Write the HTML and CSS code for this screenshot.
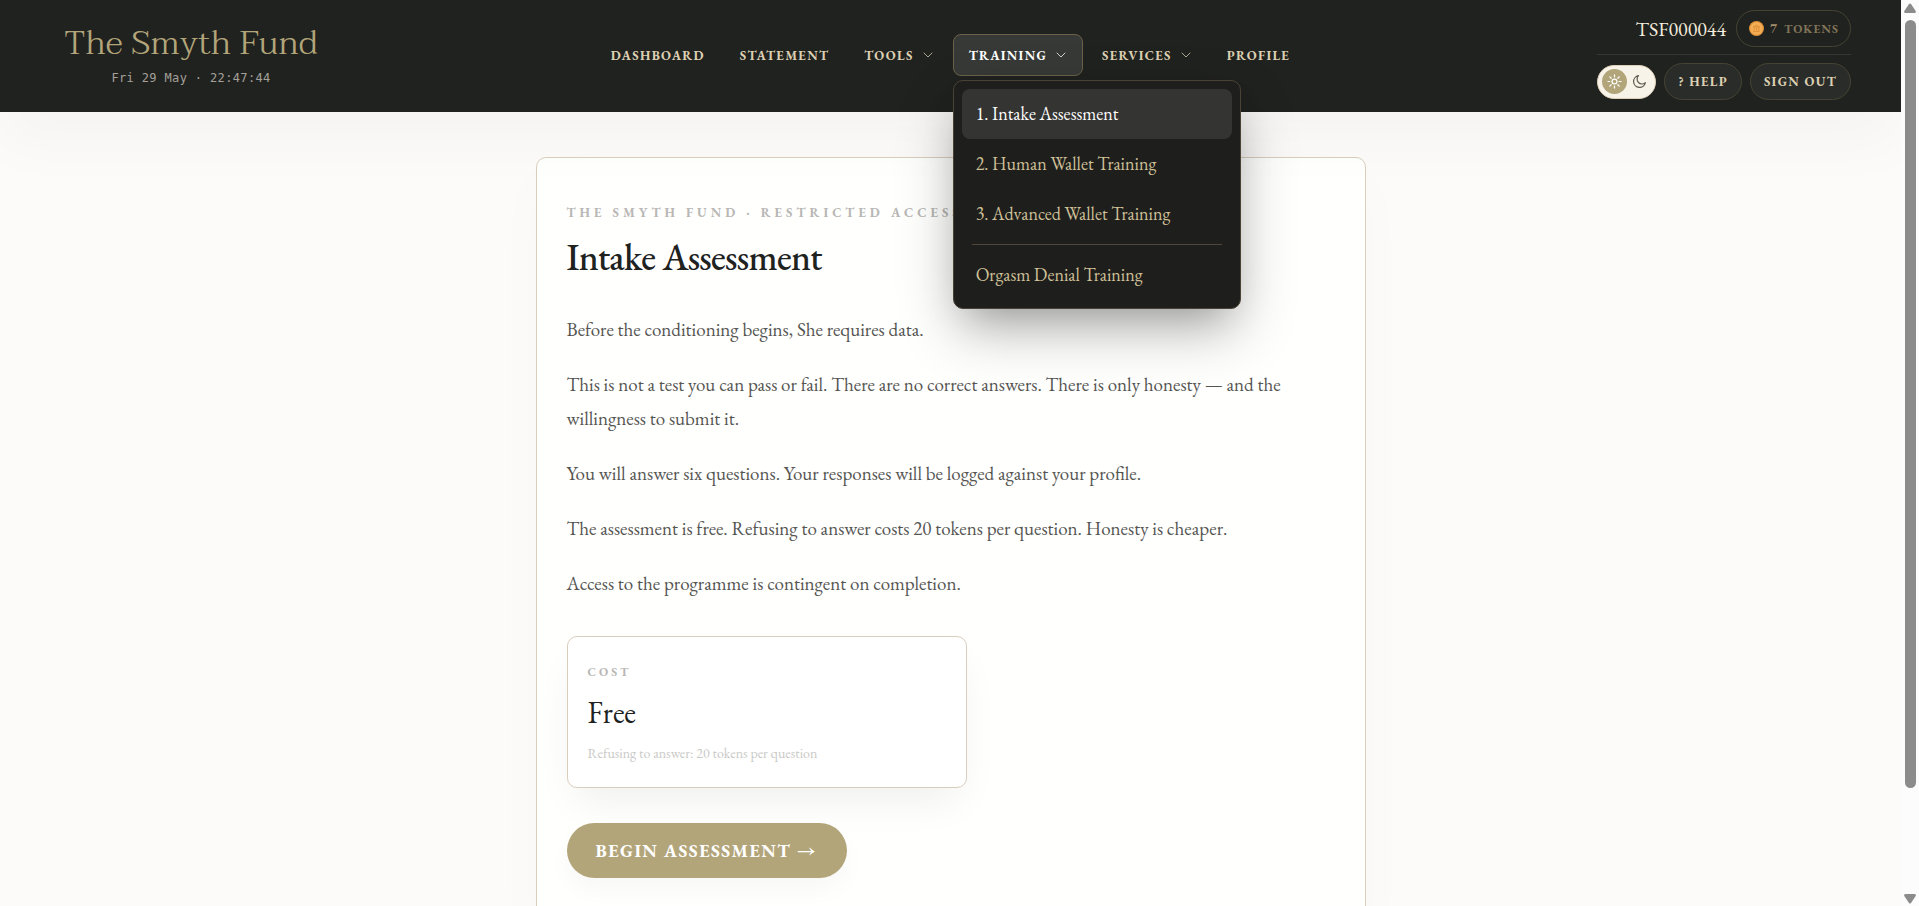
FILE: index.html
```
<!DOCTYPE html>
<html lang="en">
<head>
    <meta charset="UTF-8">
    <meta name="viewport" content="width=device-width, initial-scale=1.0">
    <title>Intake Assessment - The Smyth Fund</title>
    <link rel="stylesheet" href="styles.css">
</head>
<body>

<div class="page">

    <header class="site-header">
        <div class="brand">
            <a class="brand-name" href="#">The Smyth Fund</a>
            <div class="clock">Fri 29 May · 22:47:44</div>
        </div>

        <nav class="main-nav">
            <a class="nav-link" href="#">Dashboard</a>
            <a class="nav-link" href="#">Statement</a>
            <button class="nav-link" type="button">Tools
                <svg class="chevron" viewBox="0 0 12 12"><path d="M2 4l4 4 4-4"/></svg>
            </button>
            <div class="dropdown">
                <button class="nav-link active" type="button" aria-expanded="true">Training
                    <svg class="chevron" viewBox="0 0 12 12"><path d="M2 4l4 4 4-4"/></svg>
                </button>
                <div class="menu">
                    <a class="menu-item current" href="#">1. Intake Assessment</a>
                    <a class="menu-item" href="#">2. Human Wallet Training</a>
                    <a class="menu-item" href="#">3. Advanced Wallet Training</a>
                    <hr class="menu-divider">
                    <a class="menu-item" href="#">Orgasm Denial Training</a>
                </div>
            </div>
            <button class="nav-link" type="button">Services
                <svg class="chevron" viewBox="0 0 12 12"><path d="M2 4l4 4 4-4"/></svg>
            </button>
            <a class="nav-link" href="#">Profile</a>
        </nav>

        <div class="account">
            <div class="account-row account-top">
                <span class="account-id">TSF000044</span>
                <a class="pill tokens" href="#">
                    <svg class="coin" viewBox="0 0 16 16">
                        <circle cx="8" cy="8" r="8" fill="#e2953a"/>
                        <circle cx="8" cy="8" r="6.6" fill="#f3ae56"/>
                        <path d="M4.5 6.4 8 4.2l3.500 2.200zM5.500 7v3.500M8 7v3.500M10.500 7v3.500M4.500 11.300h7" fill="none" stroke="#d98b2e" stroke-width=".9"/>
                    </svg>
                    <b>7</b> <span>Tokens</span>
                </a>
            </div>
            <div class="account-row">
                <button class="theme-toggle" type="button" aria-label="Switch theme">
                    <span class="theme-sun">
                        <svg viewBox="0 0 16 16"><circle cx="8" cy="8" r="2.6"/><path d="M8 1v2M8 13v2M1 8h2M13 8h2M3 3l1.500 1.500M11.500 11.500 13 13M3 13l1.500-1.500M11.500 4.500 13 3"/></svg>
                    </span>
                    <span class="theme-moon">
                        <svg viewBox="0 0 16 16"><path d="M7 1.800A6.300 6.300 0 1 0 14.200 9.200 5 5 0 0 1 7 1.800z"/></svg>
                    </span>
                </button>
                <button class="pill" type="button">? Help</button>
                <button class="pill" type="button">Sign out</button>
            </div>
        </div>
    </header>

    <main class="card">
        <p class="eyebrow">The Smyth Fund · Restricted Access</p>
        <h1>Intake Assessment</h1>

        <div class="intro">
            <p>Before the conditioning begins, She requires data.</p>
            <p>This is not a test you can pass or fail. There are no correct answers. There is only honesty — and the willingness to submit it.</p>
            <p>You will answer six questions. Your responses will be logged against your profile.</p>
            <p>The assessment is free. Refusing to answer costs 20 tokens per question. Honesty is cheaper.</p>
            <p>Access to the programme is contingent on completion.</p>
        </div>

        <section class="cost">
            <h2 class="cost-label">Cost</h2>
            <p class="cost-value">Free</p>
            <p class="cost-note">Refusing to answer: 20 tokens per question</p>
        </section>

        <button class="begin" type="button">Begin Assessment →</button>
    </main>

</div>

<!-- Scroll track -->
<div class="scrollbar" aria-hidden="true">
    <svg class="arrow" viewBox="0 0 12 10"><path d="M5 1Q6 0 7 1L11.700 8Q12.300 10 10.500 10H1.500Q-.3 10 .3 8z"/></svg>
    <div class="track"><div class="thumb"></div></div>
    <svg class="arrow" viewBox="0 0 12 10"><path d="M5 9Q6 10 7 9L11.700 2Q12.300 0 10.500 0H1.500Q-.3 0 .3 2z"/></svg>
</div>

</body>
</html>
```

FILE: styles.css
```
* {
    box-sizing: border-box;
}

body {
    display: flex;
    height: 100vh;
    margin: 0;
    background-color: #fcfbf9;
    color: #20221f;
    font-family: "EB Garamond", "Liberation Serif", serif;
}

button {
    margin: 0;
    font-family: inherit;
    cursor: pointer;
}

a {
    color: inherit;
    text-decoration: none;
}

.page {
    flex: 1;
    min-width: 0;
    overflow-x: hidden;
    overflow-y: auto;
    scrollbar-width: none;
}

/* Header */
.site-header {
    position: relative;
    z-index: 10;
    display: grid;
    grid-template-columns: 1fr auto 1fr;
    align-items: center;
    min-height: 112px;
    padding: 10px 50px 12px;
    background-color: #20221f;
    box-shadow: 0 30px 60px rgba(0, 0, 0, 0.03);
}

.brand {
    justify-self: start;
    padding-left: 14px;
    text-align: center;
}

.brand-name {
    display: block;
    color: #b3a57a;
    font-family: "Taviraj", "Liberation Serif", serif;
    font-size: 34px;
    font-weight: 300;
    line-height: 44px;
}

.clock {
    margin-top: 2px;
    color: #a5a09a;
    font-family: "DejaVu Sans Mono", monospace;
    font-size: 12px;
    line-height: 22px;
    letter-spacing: 0.03em;
}

.main-nav {
    display: flex;
    align-items: center;
    gap: 3px;
}

.nav-link {
    display: flex;
    align-items: center;
    gap: 8px;
    height: 42px;
    padding: 0 15px;
    border: 1px solid transparent;
    border-radius: 8px;
    background: none;
    color: #dccfb2;
    font-size: 13px;
    font-weight: bold;
    letter-spacing: 0.1em;
    text-transform: uppercase;
}

.nav-link.active {
    border-color: #6c6248;
    background-color: #373936;
    color: #ffffff;
}

.chevron {
    width: 12px;
    height: 12px;
    fill: none;
    stroke: currentColor;
    stroke-linecap: round;
    stroke-linejoin: round;
    opacity: 0.75;
}

.dropdown {
    position: relative;
}

.menu {
    position: absolute;
    top: 46px;
    left: 0;
    width: 288px;
    padding: 8px;
    border: 1px solid #4a4335;
    border-radius: 10px;
    background-color: #1e1e1c;
    box-shadow: 0 24px 60px rgba(0, 0, 0, 0.2), 0 20px 40px -16px rgba(0, 0, 0, 0.3);
}

.menu-item {
    display: block;
    padding: 13px 14px;
    border-radius: 8px;
    color: #cfc098;
    font-size: 18px;
    line-height: 24px;
}

.menu-item.current {
    background-color: #343432;
    color: #ffffff;
}

.menu-divider {
    height: 1px;
    margin: 5px 10px;
    border: 0;
    background-color: #51463a;
}

/* Account box */
.account {
    justify-self: end;
}

.account-row {
    display: flex;
    align-items: center;
    justify-content: flex-end;
    gap: 8px;
}

.account-top {
    gap: 10px;
    margin-bottom: 8px;
    padding-bottom: 7px;
    border-bottom: 1px solid #363732;
}

.account-id {
    color: #f4ecdc;
    font-size: 20px;
    line-height: 24px;
}

.pill {
    display: flex;
    align-items: center;
    height: 37px;
    padding: 0 13px;
    border: 1px solid #474334;
    border-radius: 19px;
    background-color: #2a2c29;
    color: #dccfb2;
    font-size: 13px;
    font-weight: bold;
    letter-spacing: 0.1em;
    text-transform: uppercase;
}

.tokens {
    gap: 6px;
    padding: 0 11px 0 12px;
    background: none;
    color: #7f7358;
    font-size: 12px;
    letter-spacing: 1px;
}

.tokens b {
    color: #a08d6c;
    font-size: 13px;
}

.coin {
    width: 15px;
    height: 15px;
}

.theme-toggle {
    display: flex;
    align-items: center;
    width: 59px;
    height: 34px;
    padding: 0 4px;
    border: 1px solid #ddcfb8;
    border-radius: 17px;
    background-color: #f8f3e8;
}

.theme-sun,
.theme-moon {
    display: grid;
    place-items: center;
    width: 25px;
    height: 25px;
    border-radius: 50%;
    color: #5f5a4c;
}

.theme-sun {
    background-color: #b3a57a;
    color: #ffffff;
}

.theme-toggle svg {
    width: 15px;
    height: 15px;
    fill: none;
    stroke: currentColor;
    stroke-width: 1.3;
    stroke-linecap: round;
    stroke-linejoin: round;
}

/* Assessment card */
.card {
    max-width: 830px;
    margin: 45px auto;
    padding: 42px 30px 60px;
    border: 1px solid #d9cfbd;
    border-radius: 10px;
    background-color: #fffffe;
    box-shadow: 0 20px 60px rgba(0, 0, 0, 0.02);
}

.eyebrow {
    margin: 0;
    color: #b9b7b5;
    font-size: 13px;
    font-weight: bold;
    line-height: 26px;
    letter-spacing: 4px;
    text-transform: uppercase;
}

h1 {
    margin: 8px 0 33px;
    font-size: 37px;
    font-weight: 500;
    line-height: 46px;
    letter-spacing: -0.02em;
}

.intro {
    max-width: 720px;
    color: #555552;
    font-size: 19px;
    line-height: 34px;
}

.intro p {
    margin: 0 0 21px;
}

.cost {
    max-width: 400px;
    margin-top: 35px;
    padding: 22px 20px;
    border: 1px solid #d9cdbd;
    border-radius: 10px;
    background-color: #ffffff;
    box-shadow: 0 20px 40px -10px rgba(0, 0, 0, 0.07);
}

.cost p {
    margin: 0;
}

.cost-label {
    margin: 0;
    color: #b9b7b5;
    font-size: 12px;
    line-height: 26px;
    letter-spacing: 3px;
    text-transform: uppercase;
}

.cost .cost-value {
    margin: 8px 0;
    font-size: 30px;
    line-height: 40px;
}

.cost-note {
    color: #c9c9c6;
    font-size: 14px;
    line-height: 24px;
}

.begin {
    display: block;
    min-width: 280px;
    height: 55px;
    margin-top: 35px;
    padding: 0 29px;
    border: 0;
    border-radius: 28px;
    background-color: #b3a57a;
    color: #ffffff;
    font-size: 18px;
    font-weight: bold;
    letter-spacing: 0.08em;
    text-align: left;
    text-transform: uppercase;
    box-shadow: 0 12px 24px rgba(0, 0, 0, 0.03);
}

/* Scroll track */
.scrollbar {
    display: flex;
    flex-direction: column;
    align-items: center;
    gap: 7px;
    width: 18px;
    padding: 3px 0 2px;
    background-color: #fcfcfc;
}

.arrow {
    width: 12px;
    height: 10px;
    fill: #8b8b8b;
}

.track {
    flex: 1;
}

.thumb {
    width: 11px;
    height: calc(100% * 31 / 35);
    border-radius: 6px;
    background-color: #8b8b8b;
}
```
